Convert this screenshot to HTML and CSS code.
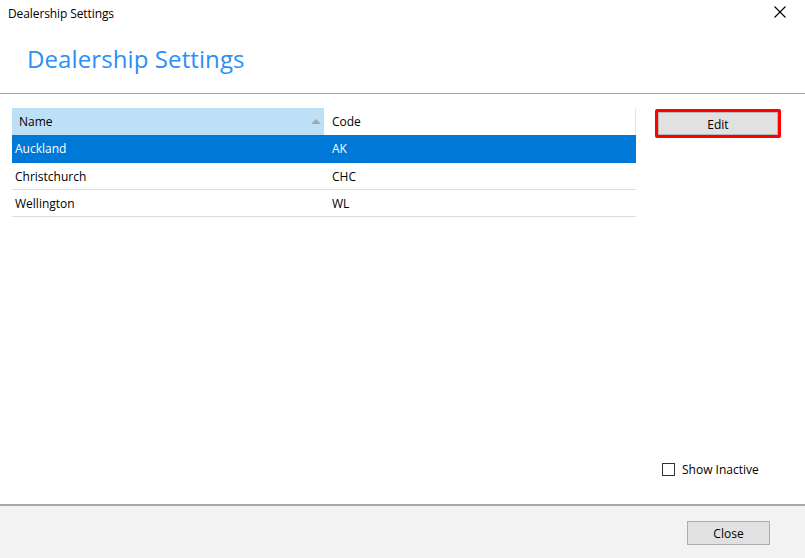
FILE: index.html
```html
<!DOCTYPE html>
<html>
<head>
<meta charset="utf-8">
<link rel="stylesheet" href="styles.css">
</head>
<body>
<div class="window">
  <div class="titlebar">
    <span class="title">Dealership Settings</span>
    <svg class="close-x" width="12" height="12" viewBox="0 0 12 12"><path d="M0.5 0.5 L11.5 11.5 M11.5 0.5 L0.5 11.5" stroke="#000" stroke-width="1.1" fill="none"/></svg>
  </div>
  <div class="header">
    <h1 class="heading">Dealership Settings</h1>
  </div>
  <div class="content">
    <div class="grid">
      <div class="row head">
        <div class="cell name sorted">Name<span class="sort-arrow"></span></div>
        <div class="cell code">Code</div>
      </div>
      <div class="row selected">
        <div class="cell name">Auckland</div>
        <div class="cell code">AK</div>
      </div>
      <div class="row">
        <div class="cell name">Christchurch</div>
        <div class="cell code">CHC</div>
      </div>
      <div class="row">
        <div class="cell name">Wellington</div>
        <div class="cell code">WL</div>
      </div>
    </div>
    <div class="side">
      <button class="btn edit">Edit</button>
      <label class="check"><span class="box"></span>Show Inactive</label>
    </div>
  </div>
  <div class="footer">
    <button class="btn close">Close</button>
  </div>
</div>
</body>
</html>
```
FILE: styles.css
```css
* { box-sizing: border-box; }
html, body { margin: 0; padding: 0; }
body {
  width: 805px;
  height: 558px;
  background: #fff;
  font-family: "Open Sans", "Noto Sans", sans-serif;
  font-size: 12px;
  color: #000;
  overflow: hidden;
}
.window { display: flex; flex-direction: column; height: 558px; }
.titlebar {
  height: 28px;
  display: flex;
  align-items: center;
  justify-content: space-between;
  padding: 0 19px 0 8px;
  flex: none;
}
.title { font-size: 12px; letter-spacing: -0.1px; margin-top: -2px; }
.close-x { margin-top: -4px; }
.header {
  height: 66px;
  border-bottom: 1px solid #a0a0a0;
  padding: 15px 0 0 27px;
  flex: none;
}
.heading {
  margin: 0;
  font-weight: 400;
  font-size: 24px;
  letter-spacing: 0.1px;
  color: #2c8ff7;
  line-height: 32px;
}
.content {
  flex: 1;
  display: flex;
  padding: 14px 0 0 12px;
}
.grid { width: 624px; flex: none; display: flex; flex-direction: column; }
.row {
  display: flex;
  height: 27px;
  border-bottom: 1px solid #dcdcdc;
}
.row.head { height: 27px; border-bottom: none; border-right: 1px solid #e5e5e5; }
.cell { display: flex; align-items: center; padding-left: 3px; }
.cell.name { width: 312px; }
.cell.code { flex: 1; padding-left: 8px; }
.head .cell.name { background: #bee0f6; padding-left: 7px; position: relative; }
.sort-arrow {
  position: absolute;
  right: 3px;
  top: 11px;
  width: 0; height: 0;
  border-left: 5px solid transparent;
  border-right: 5px solid transparent;
  border-bottom: 5px solid #a0a9b0;
}
.row.selected { height: 28px; background: #0078d7; color: #fff; border-bottom-color: #0078d7; }
.side {
  width: 150px;
  flex: none;
  margin-left: 19px;
  display: flex;
  flex-direction: column;
}
.btn {
  font-family: inherit;
  font-size: 12px;
  background: #e1e1e1;
  border: 1px solid #adadad;
  color: #000;
  padding: 0;
}
.edit {
  width: 126px;
  height: 29px;
  margin-top: 1px;
  padding-top: 1px;
  border: 3px solid #ff0000;
  border-radius: 2px;
  box-shadow: inset 0 0 0 1px #b8b8b8;
}
.check {
  margin-top: auto;
  margin-bottom: 26px;
  margin-left: 7px;
  display: flex;
  align-items: center;
}
.box {
  width: 13px; height: 13px;
  border: 1px solid #333;
  background: #fff;
  margin-right: 7px;
}
.footer {
  height: 54px;
  flex: none;
  background: #f3f3f3;
  border-top: 2px solid #a8a8a8;
  display: flex;
  justify-content: flex-end;
  align-items: flex-start;
  padding: 15px 35px 0 0;
}
.close { width: 83px; height: 24px; }
```
